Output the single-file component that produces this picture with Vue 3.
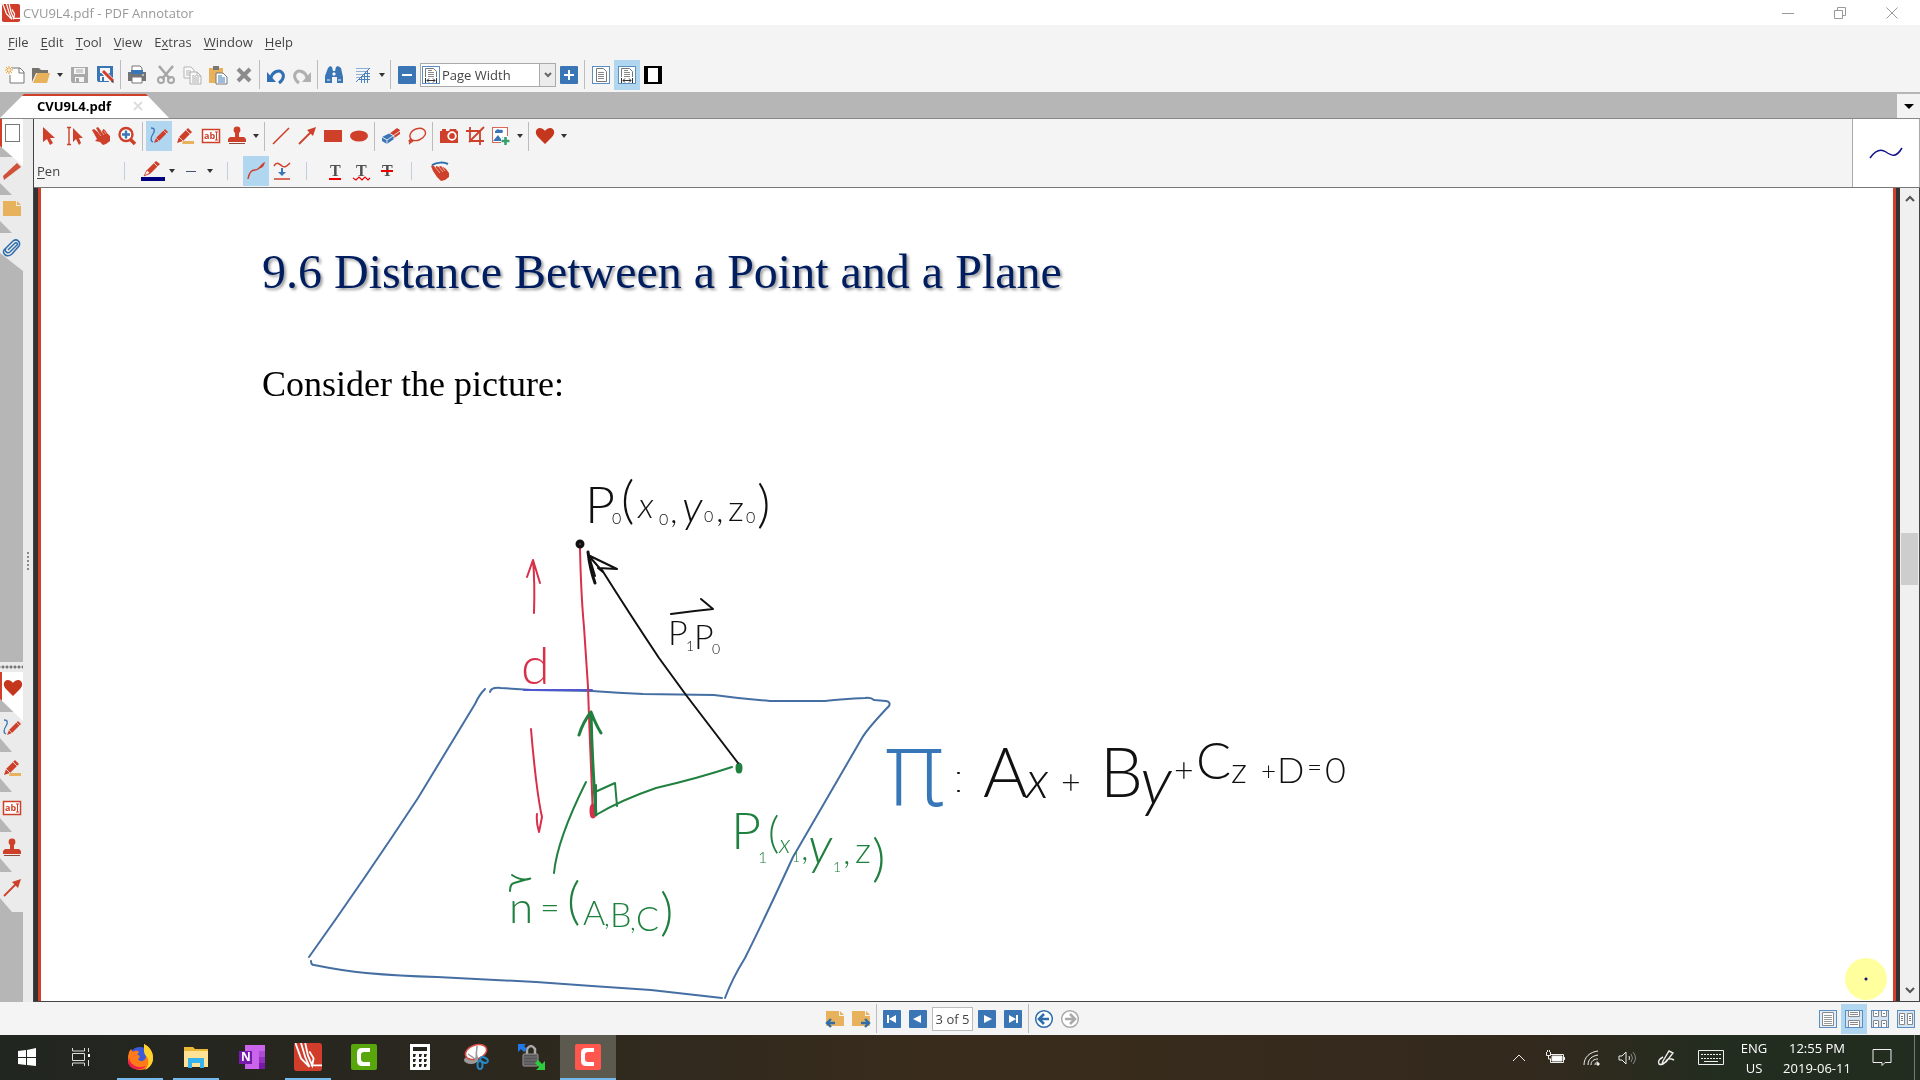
<script setup>
import { ref, h } from 'vue'

const menus = [
  ['', 'F', 'ile'], ['', 'E', 'dit'], ['', 'T', 'ool'], ['', 'V', 'iew'],
  ['E', 'x', 'tras'], ['', 'W', 'indow'], ['', 'H', 'elp']
]

// Letters that belong to an icon: characters, position, size, family
const glyphs = {
  text: { t: 'ab', x: 3, y: 13, size: 9, family: 'Open Sans, sans-serif', fill: '#cf402b' },
  tunder: { t: 'T', x: 5, y: 15, size: 16, family: 'Liberation Serif, serif', fill: '#505050' },
  twave: { t: 'T', x: 5, y: 15, size: 16, family: 'Liberation Serif, serif', fill: '#505050' },
  tstrike: { t: 'T', x: 5, y: 15, size: 16, family: 'Liberation Serif, serif', fill: '#505050', under: true },
  onenote: { t: 'N', x: 3, y: 18, size: 12, family: 'Open Sans, sans-serif', fill: '#fff' }
}
const Icon = ({ name }) => {
  const g = glyphs[name]
  const use = h('use', { href: '#i-' + name })
  if (!g) return h('svg', null, [use])
  const text = h('text', { x: g.x, y: g.y, 'font-size': g.size, 'font-family': g.family, 'font-weight': 700, fill: g.fill }, g.t)
  return h('svg', null, g.under ? [text, use] : [use, text])
}
Icon.props = ['name']

const fileTools = [
  { icon: 'new', label: 'New' }, { icon: 'open', label: 'Open' }, { caret: 'Open recent' },
  { icon: 'save', label: 'Save' }, { icon: 'saveas', label: 'Save as' }, { sep: true },
  { icon: 'print', label: 'Print' }, { gap: true }, { icon: 'cut', label: 'Cut' },
  { icon: 'copy', label: 'Copy' }, { icon: 'paste', label: 'Paste' }, { icon: 'delete', label: 'Delete' },
  { sep: true }, { icon: 'undo', label: 'Undo' }, { icon: 'redo', label: 'Redo' }, { sep: true },
  { icon: 'find', label: 'Find' }, { gap: true }, { icon: 'grid', label: 'Grid' }, { caret: 'Grid options' }, { sep: true },
  { icon: 'minus', label: 'Zoom out' }
]
const viewTools = [
  { icon: 'plus', label: 'Zoom in' }, { sep: true },
  { icon: 'fullpage', label: 'Full page' }, { icon: 'pagewidth', label: 'Page width', on: true },
  { icon: 'fullscreen', label: 'Full screen' }
]
const drawTools = [
  { icon: 'select', label: 'Select' }, { icon: 'textselect', label: 'Select text' },
  { icon: 'hand', label: 'Pan' }, { icon: 'zoom', label: 'Zoom' }, { sep: true },
  { icon: 'pen', label: 'Pen', on: true }, { icon: 'marker', label: 'Marker' },
  { icon: 'text', label: 'Text' }, { icon: 'stamp', label: 'Stamp' }, { caret: 'Stamps' }, { sep: true },
  { icon: 'line', label: 'Line' }, { icon: 'arrow', label: 'Arrow' },
  { icon: 'rect', label: 'Rectangle' }, { icon: 'ellipse', label: 'Ellipse' }, { sep: true },
  { icon: 'eraser', label: 'Eraser' }, { icon: 'lasso', label: 'Lasso' }, { sep: true },
  { icon: 'camera', label: 'Snapshot' }, { icon: 'crop', label: 'Crop' },
  { icon: 'image', label: 'Insert image' }, { caret: 'Insert options' }, { sep: true },
  { icon: 'heart', label: 'Favorites' }, { caret: 'Favorites list' }
]
const penTools = [
  { sep: true }, { icon: 'pencolor', label: 'Pen color' }, { caret: 'Colors' },
  { icon: 'dash', label: 'Line style' }, { caret: 'Line styles' }, { sep: true },
  { icon: 'curve', label: 'Freehand', on: true }, { icon: 'smooth', label: 'Smooth' }, { sep: true },
  { icon: 'tunder', label: 'Underline' }, { icon: 'twave', label: 'Squiggly' }, { icon: 'tstrike', label: 'Strike out' },
  { sep: true }, { icon: 'touch', label: 'Touch input' }
]

const sideTop = [
  { icon: 'pagetab', label: 'Pages', on: true }, { icon: 'marktab', label: 'Annotations' },
  { icon: 'note', label: 'Bookmarks' }, { icon: 'clip', label: 'Attachments' }
]
const sideBottom = [
  { icon: 'heart', label: 'Favorites', on: true }, { icon: 'pen', label: 'Pens' },
  { icon: 'marker', label: 'Markers' }, { icon: 'text', label: 'Texts' },
  { icon: 'stamp', label: 'Stamps' }, { icon: 'arrow', label: 'Arrows' }
]

const layouts = [
  { icon: 'lay1', label: 'Single page' }, { icon: 'lay2', label: 'Continuous', on: true },
  { icon: 'lay3', label: 'Facing continuous' }, { icon: 'lay4', label: 'Facing pages' }
]

const apps = [
  { icon: 'firefox', label: 'Firefox', open: true }, { icon: 'explorer', label: 'File Explorer', open: true },
  { icon: 'onenote', label: 'OneNote' }, { icon: 'annot', label: 'PDF Annotator', open: true },
  { icon: 'camgreen', label: 'Camtasia' }, { icon: 'calc', label: 'Calculator' },
  { icon: 'snip', label: 'Snipping Tool' }, { icon: 'lock', label: 'Remote lock' },
  { icon: 'camred', label: 'Camtasia Recorder', active: true }
]

// Handwritten labels: [character, x, baseline y, size]
const labels = [
  { ink: 'black', parts: [['P', 586, 523, 52], ['0', 613, 524, 16], ['(', 622, 518, 52], ['x', 639, 518, 36], ['0', 660, 525, 16], [',', 671, 523, 34], ['y', 683, 522, 44], ['0', 705, 522, 16], [',', 717, 522, 34], ['z', 729, 521, 36], ['0', 747, 523, 16], [')', 758, 522, 52]] },
  { ink: 'black', parts: [['P', 669, 645, 34], ['1', 687, 651, 14], ['P', 695, 649, 34], ['0', 713, 654, 14]] },
  { ink: 'red', parts: [['d', 522, 684, 52]] },
  { ink: 'green', parts: [['P', 732, 849, 52], ['1', 759, 863, 16], ['(', 769, 848, 44], ['x', 780, 853, 26], ['1', 793, 862, 14], [',', 802, 860, 34], ['y', 809, 864, 52], ['1', 834, 872, 14], [',', 844, 864, 34], ['z', 856, 863, 36], [')', 873, 876, 52]] },
  { ink: 'green', parts: [['n', 510, 923, 44], ['=', 541, 919, 34], ['(', 568, 919, 52], ['A', 584, 925, 34], [',', 605, 926, 26], ['B', 611, 927, 34], [',', 631, 930, 26], ['C', 637, 931, 34], [')', 661, 930, 52]] },
  { ink: 'blue', parts: [['π', 884, 806, 104]] },
  { ink: 'black', parts: [['A', 984, 797, 68], ['x', 1027, 798, 52], ['+', 1062, 794, 34], ['B', 1101, 797, 68], ['y', 1141, 804, 68], ['+', 1175, 782, 34], ['C', 1197, 779, 52], ['z', 1232, 783, 36], ['+', 1262, 780, 26], ['D', 1278, 783, 36], ['=', 1308, 776, 26], ['0', 1326, 783, 36]] }
]
const cursive = (c) => c === 'x' || c === 'y'
const colon = [[959, 773], [959, 791]]

const zoomLevel = ref('Page Width')
const pageText = ref('3 of 5')
</script>

<template>
  <div class="app">
    <svg class="sprite" aria-hidden="true">
      <symbol id="i-annot" viewBox="0 0 20 20"><rect width="20" height="20" rx="2" fill="#d13d2b" /><path d="M1 0l4 11 6 6-3-7L5 0M8 0l2 9 3 7 1-5-3-5M12 16h8" fill="none" stroke="#fff" stroke-width="1.3" /></symbol>
      <symbol id="i-new" viewBox="0 0 20 20"><path d="M7 3h8l4 4v11H5v-8" fill="#fff" stroke="#777" /><path d="M14 3v5h5" fill="none" stroke="#777" /><path d="M4 1v8M0 5h8M1 2l6 6M7 2L1 8" stroke="#e8a640" /><circle cx="4" cy="5" r="1" fill="#fff" /></symbol>
      <symbol id="i-open" viewBox="0 0 20 20"><path d="M1 3h7l2 2h7v3H5L1 17z" fill="#77726a" /><path d="M6 8h13l-3 10H2z" fill="#e8b25c" /></symbol>
      <symbol id="i-save" viewBox="0 0 20 20"><path d="M2 2h17v16H3l-1-2z" fill="#a9a9a9" /><path d="M5 3h11v6H5zM6 12h9v5H6z" fill="#f5f5f5" /><path d="M7 5h7M7 7h7" stroke="#a9a9a9" /><path d="M7 13h3v4H7z" fill="#a9a9a9" /></symbol>
      <symbol id="i-saveas" viewBox="0 0 20 20"><path d="M2 1h16v16H3l-1-2z" fill="#3a76b6" /><path d="M5 3h10v5H5zM5 11h9v5H5z" fill="#f5f5f5" /><path d="M7 12h2v4H7z" fill="#3a76b6" /><path d="M8 6l9 10" stroke="#fff" stroke-width="5" /><path d="M8 6l10 10" stroke="#d13f2a" stroke-width="3" /><path d="M18 15l1 3-3-1" fill="#444" /></symbol>
      <symbol id="i-print" viewBox="0 0 20 20"><path d="M5 1h8l2 2v4H5z" fill="#fff" stroke="#777" /><path d="M1 7h18v9H1z" fill="#747474" /><path d="M4 5h12v4H4z" fill="#3a76b6" /><path d="M5 12h10v6H5z" fill="#fff" stroke="#777" /><path d="M15 10h2" stroke="#fff" /></symbol>
      <symbol id="i-cut" viewBox="0 0 20 20"><path d="M3 1l11 13M17 1L6 14" stroke="#a6a6a6" stroke-width="2.6" /><circle cx="5" cy="15" r="3" fill="none" stroke="#a6a6a6" stroke-width="2" /><circle cx="15" cy="15" r="3" fill="none" stroke="#a6a6a6" stroke-width="2" /></symbol>
      <symbol id="i-copy" viewBox="0 0 20 20"><path d="M2 2h7l3 3v8H2z" fill="#fafafa" stroke="#b5b5b5" /><path d="M4 6h5M4 8h5M4 10h5" stroke="#b5b5b5" /><path d="M8 7h7l4 4v8H8z" fill="#fafafa" stroke="#b0b0b0" /><path d="M15 7v4h4M10 11h4M10 13h7M10 15h7M10 17h7" fill="none" stroke="#b0b0b0" /></symbol>
      <symbol id="i-paste" viewBox="0 0 20 20"><path d="M1 3h14v15H1z" fill="#e8b25c" /><path d="M5 1h6v4H5z" fill="#777" /><path d="M8 8h7l4 4v7H8z" fill="#fff" stroke="#777" /><path d="M10 11h4M10 13h7M10 15h7M10 17h7" stroke="#3a76b6" /></symbol>
      <symbol id="i-delete" viewBox="0 0 20 20"><path d="M4 4l12 12M16 4L4 16" stroke="#8c8c8c" stroke-width="4" /></symbol>
      <symbol id="i-undo" viewBox="0 0 20 20"><path d="M5 13c1-6 9-10 12-4 1 3 0 6-4 9" fill="none" stroke="#2f70b5" stroke-width="3" /><path d="M1 7v10h9z" fill="#2f70b5" /></symbol>
      <symbol id="i-redo" viewBox="0 0 20 20"><path d="M15 13C14 7 6 3 3 9c-1 3 0 6 4 9" fill="none" stroke="#b0b0b0" stroke-width="3" /><path d="M19 7v10h-9z" fill="#b0b0b0" /></symbol>
      <symbol id="i-find" viewBox="0 0 20 20"><path d="M4 3l2-2 2 1 1 4h2l1-4 2-1 3 2 2 9v6h-6v-6H8v6H1v-7z" fill="#3a76b6" /><path d="M9 8h2v2H9zM3 15h3M14 15h3" fill="#fff" stroke="#f4f4f4" /></symbol>
      <symbol id="i-grid" viewBox="0 0 20 20"><path d="M3 3.500h13M3 6.500h10M3 9.500h7M3 12.500h4" stroke="#8fb0d6" /><path d="M3 17L17 3M17 8.500h-5M17 11.500H9M17 14.500H6M8.500 12v6M11.500 9v9M14.500 6v12" stroke="#4c80bb" /></symbol>
      <symbol id="i-minus" viewBox="0 0 20 20"><rect x="1" y="1" width="18" height="18" rx="1" fill="#3a76b6" /><path d="M5 10h10" stroke="#fff" stroke-width="2" /></symbol>
      <symbol id="i-plus" viewBox="0 0 20 20"><rect x="1" y="1" width="18" height="18" rx="1" fill="#3a76b6" /><path d="M5 10h10M10 5v10" stroke="#fff" stroke-width="2" /></symbol>
      <symbol id="i-fullpage" viewBox="0 0 20 20"><rect x="1.500" y="1.500" width="17" height="17" fill="#fff" stroke="#5b8fc2" /><path d="M5.500 3.500h7l3 3v10h-10z" fill="#fff" stroke="#777" /><path d="M7 7.500h6M7 9.500h6M7 11.500h6M7 13.500h6" stroke="#888" /></symbol>
      <symbol id="i-pagewidth" viewBox="0 0 20 20"><rect x="1.500" y="1.500" width="17" height="17" fill="#fff" stroke="#5b8fc2" /><path d="M4.500 12V3.500h8l3 3V12" fill="#fff" stroke="#777" /><path d="M7 5.500h4M7 7.500h6M7 9.500h6M7 11.500h6" stroke="#888" /><path d="M4.500 13v5M15.500 13v5M6 15.500h8M8 13.500l-2 2 2 2M12 13.500l2 2-2 2" fill="none" stroke="#333" /></symbol>
      <symbol id="i-fullscreen" viewBox="0 0 20 20"><path d="M1 1h18v18H1z" /><path d="M5 3h10v14H5z" fill="#fff" /></symbol>
      <symbol id="i-select" viewBox="0 0 20 20"><path d="M4 1v15l4-3 3 6 3-2-3-5h5z" fill="#cf402b" /></symbol>
      <symbol id="i-textselect" viewBox="0 0 20 20"><path d="M2 1.500h2M6 1.500H4v17M2 18.500h4" fill="none" stroke="#cf402b" stroke-width="1.4" /><path d="M8 2v14l3-3 3 6 2-2-2-5h4z" fill="#cf402b" /></symbol>
      <symbol id="i-hand" viewBox="0 0 20 20"><path d="M1 4l2-1 5 4-3-5 2-1 4 5 1-3 2 1 2 3 3 3v5l-4 3-3 1-3-3-5-1 2-2z" fill="#cf402b" /><path d="M7 6l3 4M10 5l3 4M13 5l2 3" stroke="#f3c6bd" stroke-width=".7" /></symbol>
      <symbol id="i-zoom" viewBox="0 0 20 20"><circle cx="9" cy="8.500" r="6.500" fill="#fff" stroke="#cf402b" stroke-width="2.400" /><path d="M13 13l5 5" stroke="#cf402b" stroke-width="3.600" /><path d="M5 8.500h8M9 4.500v8" stroke="#3a76b6" stroke-width="2.400" /></symbol>
      <symbol id="i-pen" viewBox="0 0 20 20"><path d="M2 2c4 0 4 3 2 6s-3 7 0 8" fill="none" stroke="#3a76b6" stroke-width="1.300" /><path d="M5 17l2-5 9-9 3 3-9 9z" fill="#cf402b" /><path d="M7 12l3 3M14 4l4 4" stroke="#f0d0c8" stroke-width=".8" /></symbol>
      <symbol id="i-marker" viewBox="0 0 20 20"><path d="M8 15h11v3H7z" fill="#e8b25c" /><path d="M2 17l2-6 9-9 4 4-9 9z" fill="#cf402b" /><path d="M4 11l4 4M11 4l4 4" stroke="#f3d6cf" /></symbol>
      <symbol id="i-text" viewBox="0 0 20 20"><rect x="1.500" y="3.500" width="17" height="13" fill="#fff" stroke="#cf402b" stroke-width="1.500" /><path d="M14 6h3M15.500 6v8M14 14h3" stroke="#cf402b" /></symbol>
      <symbol id="i-stamp" viewBox="0 0 20 20"><circle cx="10" cy="4" r="3.400" fill="#cf402b" /><path d="M8 6h4v5h5l2 2v3H1v-3l2-2h5z" fill="#cf402b" /><path d="M2 17.500h16" stroke="#8f4a3e" /></symbol>
      <symbol id="i-line" viewBox="0 0 20 20"><path d="M2 18L18 2" stroke="#cf402b" stroke-width="1.600" /></symbol>
      <symbol id="i-arrow" viewBox="0 0 20 20"><path d="M2 18L14 6" stroke="#cf402b" stroke-width="1.800" /><path d="M19 1l-3 9-6-6z" fill="#cf402b" /></symbol>
      <symbol id="i-rect" viewBox="0 0 20 20"><path d="M1 4h18v12H1z" fill="#cf402b" /></symbol>
      <symbol id="i-ellipse" viewBox="0 0 20 20"><ellipse cx="10" cy="10" rx="9" ry="5.500" fill="#cf402b" /></symbol>
      <symbol id="i-eraser" viewBox="0 0 20 20"><path d="M8 8l8-6 3 2v4l-7 5z" fill="#cf402b" /><path d="M1 11l8-4 4 3v3l-7 5-5-3z" fill="#3a76b6" /><path d="M1 11l5 3 13-9M6 14v4M8 7l5 3v3" fill="none" stroke="#f4f4f4" stroke-width=".9" /></symbol>
      <symbol id="i-lasso" viewBox="0 0 20 20"><path d="M5 14C1 11 3 5 9 3c6-2 11 1 9 6-2 4-8 7-13 5-2-1-4 1-2 2s4-2 2-2-1 3-3 4" fill="none" stroke="#cf402b" stroke-width="1.400" /></symbol>
      <symbol id="i-camera" viewBox="0 0 20 20"><path d="M1 5h2V3h4v2h3l1-2h6l1 2h1v12H1z" fill="#cf402b" /><circle cx="13" cy="10" r="3.800" fill="#cf402b" stroke="#fff" stroke-width="1.800" /></symbol>
      <symbol id="i-crop" viewBox="0 0 20 20"><path d="M5 1v14h14M1 5h14v14M4 16L19 1" fill="none" stroke="#cf402b" stroke-width="1.800" /></symbol>
      <symbol id="i-image" viewBox="0 0 20 20"><rect x="1.500" y="1.500" width="15" height="15" fill="#fff" stroke="#da6757" /><path d="M4 6c0-2 3-4 5-2 3-1 4 2 2 3H4zM2 15l5-6 3 4 3-3 3 5z" fill="#3a76b6" /><path d="M14.500 10v9M10 14.500h9" stroke="#fff" stroke-width="5" /><path d="M14.500 11v8M10.500 15h8" stroke="#38a06b" stroke-width="2.600" /></symbol>
      <symbol id="i-heart" viewBox="0 0 20 20"><path d="M10 18L3 11C-1 7 1 2 5 2c3 0 5 3 5 3s2-3 5-3c4 0 6 5 2 9z" fill="#c5371d" /></symbol>
      <symbol id="i-pencolor" viewBox="0 0 24 24"><path d="M3 17l3-6 9-9 4 3-10 10z" fill="#cf402b" /><path d="M3 17l3-6 3 3z" fill="#f4f4f4" stroke="#cf402b" stroke-width=".8" /><path d="M13 4l4 4" stroke="#f3d6cf" /><path d="M0 18h24v4H0z" fill="#00007f" /></symbol>
      <symbol id="i-dash" viewBox="0 0 20 20"><path d="M5 10.500h10" stroke="#46517c" /></symbol>
      <symbol id="i-curve" viewBox="0 0 20 20"><path d="M2 18c1-6 3-9 7-9 5 0 5-5 9-6" fill="none" stroke="#cf402b" stroke-width="1.400" /><path d="M11 8c4-1 4-6 8-7-1 5-4 7-8 7z" fill="#cf402b" /></symbol>
      <symbol id="i-smooth" viewBox="0 0 20 20"><path d="M2 5c3-5 5-2 8 0s5 0 8-3M2 18h16" fill="none" stroke="#cf402b" stroke-width="1.500" /><path d="M10 7v5" stroke="#3a76b6" stroke-width="2" /><path d="M6 11h8l-4 4z" fill="#3a76b6" /></symbol>
      <symbol id="i-tunder" viewBox="0 0 20 20"><path d="M4 18h12" stroke="#f00000" stroke-width="2" /></symbol>
      <symbol id="i-twave" viewBox="0 0 20 20"><path d="M2 17l3 2 3-3 3 3 3-3 3 3 2-2" fill="none" stroke="#f00000" stroke-width="1.200" /></symbol>
      <symbol id="i-tstrike" viewBox="0 0 20 20"><path d="M4 10h12" stroke="#f00000" stroke-width="2" /></symbol>
      <symbol id="i-touch" viewBox="0 0 20 20"><path d="M1 5l2-1 3 3 0-2 3 1 1-1 3 1 3 2 3 4v4l-4 3-4 1-4-4-4-6z" fill="#cf402b" /><path d="M5 6l5 6M8 5l5 6M12 6l3 4" stroke="#f3c6bd" stroke-width=".8" /><path d="M2 4c5-3 12-3 16-1" fill="none" stroke="#2d70ad" stroke-width="2" /></symbol>
      <symbol id="i-pagetab" viewBox="0 0 20 20"><rect x="2.500" y="1.500" width="14" height="17" fill="#fff" stroke="#777" /></symbol>
      <symbol id="i-marktab" viewBox="0 0 20 20"><path d="M1 15l1 4 17-13-4-4z" fill="#cf5138" /></symbol>
      <symbol id="i-note" viewBox="0 0 20 20"><path d="M1 2h13v5h5v10H1z" fill="#e8b25c" /><path d="M15 2l4 4h-4z" fill="#e8b25c" /></symbol>
      <symbol id="i-clip" viewBox="0 0 20 20"><path d="M6 13l7-7c2-1 3 1 2 2l-7 7c-3 2-6-1-4-4l7-7c4-3 8 1 6 5l-7 8c-5 4-10 0-8-4l4-4" fill="none" stroke="#2e6dac" stroke-width="1.500" /></symbol>
      <symbol id="i-prevmark" viewBox="0 0 20 20"><path d="M1 2h13v5h5v10H1z" fill="#e8b25c" /><path d="M15 2l4 4h-4z" fill="#e8b25c" /><path d="M10 14H3M6 10l-4 4 4 4" fill="none" stroke="#2e6dac" stroke-width="2.400" /></symbol>
      <symbol id="i-nextmark" viewBox="0 0 20 20"><path d="M1 2h13v5h5v10H1z" fill="#e8b25c" /><path d="M15 2l4 4h-4z" fill="#e8b25c" /><path d="M10 14h8M14 10l4 4-4 4" fill="none" stroke="#2e6dac" stroke-width="2.400" /></symbol>
      <symbol id="i-first" viewBox="0 0 20 20"><rect x="1" y="1" width="18" height="18" rx="1" fill="#3a76b6" /><path d="M5 6h2v8H5zM14 6v8l-7-4z" fill="#fff" /></symbol>
      <symbol id="i-prev" viewBox="0 0 20 20"><rect x="1" y="1" width="18" height="18" rx="1" fill="#3a76b6" /><path d="M13 6v8l-8-4z" fill="#fff" /></symbol>
      <symbol id="i-next" viewBox="0 0 20 20"><rect x="1" y="1" width="18" height="18" rx="1" fill="#3a76b6" /><path d="M7 6v8l8-4z" fill="#fff" /></symbol>
      <symbol id="i-last" viewBox="0 0 20 20"><rect x="1" y="1" width="18" height="18" rx="1" fill="#3a76b6" /><path d="M13 6h2v8h-2zM6 6v8l7-4z" fill="#fff" /></symbol>
      <symbol id="i-back" viewBox="0 0 20 20"><circle cx="10" cy="10" r="8.300" fill="#fff" stroke="#2e6dac" stroke-width="1.500" /><path d="M15 10H6M10 5l-5 5 5 5" fill="none" stroke="#2e6dac" stroke-width="2.600" /></symbol>
      <symbol id="i-forward" viewBox="0 0 20 20"><circle cx="10" cy="10" r="8.300" fill="#fff" stroke="#aaa" stroke-width="1.500" /><path d="M5 10h9M10 5l5 5-5 5" fill="none" stroke="#aaa" stroke-width="2.600" /></symbol>
      <symbol id="i-lay1" viewBox="0 0 20 20"><rect x="1.500" y="1.500" width="17" height="17" fill="#e3eefa" stroke="#5b8fc2" /><path d="M4.500 3.500h11v13h-11z" fill="#fff" stroke="#888" /><path d="M6 6.500h8M6 8.500h8M6 10.500h8M6 12.500h8M6 14.500h8" stroke="#999" /></symbol>
      <symbol id="i-lay2" viewBox="0 0 20 20"><rect x="1.500" y="1.500" width="17" height="17" fill="#d3e4f4" stroke="#5b8fc2" /><path d="M4.500 2v5.500h11V2M4.500 18v-6.500h11V18" fill="#fff" stroke="#888" /><path d="M6 3.500h8M6 5.500h8M6 13.500h8M6 15.500h8" stroke="#888" /></symbol>
      <symbol id="i-lay3" viewBox="0 0 20 20"><rect x="1.500" y="1.500" width="17" height="17" fill="#d3e4f4" stroke="#5b8fc2" /><path d="M3.500 2v5.500h5V2M11.500 2v5.500h5V2M3.500 18v-6.500h5V18M11.500 18v-6.500h5V18" fill="#fff" stroke="#888" /><path d="M5 4.500h2M13 4.500h2M5 14.500h2M13 14.500h2" stroke="#777" /></symbol>
      <symbol id="i-lay4" viewBox="0 0 20 20"><rect x="1.500" y="1.500" width="17" height="17" fill="#d3e4f4" stroke="#5b8fc2" /><path d="M3.500 4.500h5v11h-5zM11.500 4.500h5v11h-5z" fill="#fff" stroke="#888" /><path d="M5 7.500h2M13 7.500h2M5 9.500h2M13 9.500h2M5 11.500h2M13 11.500h2" stroke="#777" /></symbol>
      <symbol id="i-firefox" viewBox="0 0 28 28"><circle cx="14" cy="15" r="11" fill="#3b5bd8" /><path d="M3 9l2-3 2 3c3-2 5-1 6 0l-2 3c3 0 4 2 1 4 2 4 8 2 8-3 0-4-2-7-2-12 6 3 9 8 9 14 0 8-6 12-13 12S1 22 2 14c0-2 1-4 1-5z" fill="#ff7a18" /><path d="M18 1c6 3 9 8 9 14 0 6-4 10-8 12 3-4 4-7 3-11-1-3-4-4-4-8z" fill="#ffd22e" /><path d="M3 14c1 9 10 12 17 9-4 5-15 5-18-3z" fill="#f0204d" /></symbol>
      <symbol id="i-explorer" viewBox="0 0 28 28"><path d="M2 4h9l2 2h13v4H2z" fill="#eab836" /><path d="M2 8h24v16H2z" fill="#ffe296" /><path d="M6 15h16v10h-4v-5h-8v5H6z" fill="#35b3ee" /></symbol>
      <symbol id="i-onenote" viewBox="0 0 28 28"><path d="M7 2h20v24H7z" fill="#ca64ea" /><path d="M21 8h6v6h-6z" fill="#ae4bd5" /><path d="M21 14h6v6h-6z" fill="#9332bf" /><path d="M21 20h6v6h-6z" fill="#7719aa" /><path d="M1 8h13v13H1z" fill="#7719aa" /></symbol>
      <symbol id="i-camgreen" viewBox="0 0 28 28"><rect x="1" y="1" width="26" height="26" rx="2" fill="#58a60b" /><path d="M20 5H12q-5 0-5 5v8q0 5 5 5h8v-4h-6q-3 0-3-3v-4q0-3 3-3h6z" fill="#fff" /></symbol>
      <symbol id="i-camred" viewBox="0 0 28 28"><rect x="1" y="1" width="26" height="26" rx="2" fill="#ff574d" /><path d="M20 5H12q-5 0-5 5v8q0 5 5 5h8v-4h-6q-3 0-3-3v-4q0-3 3-3h6z" fill="#fff" /></symbol>
      <symbol id="i-calc" viewBox="0 0 28 28"><path d="M4 1h20v26H4z" fill="#fff" /><path d="M7 4h14v4H7zM7 11h3l-1 3H7zM13 11h3l-1 3h-2zM18 11h3l-1 3h-2zM7 16h3l-1 3H7zM13 16h3l-1 3h-2zM18 16h3l-1 3h-2zM7 21h3l-1 3H7zM13 21h3l-1 3h-2zM18 21h3l-1 3h-2z" fill="#27231d" /></symbol>
      <symbol id="i-snip" viewBox="0 0 28 28"><ellipse cx="9" cy="17" rx="7" ry="4" fill="#9a9a9a" /><ellipse cx="14" cy="9" rx="11" ry="7" fill="#fff" stroke="#d94a45" stroke-width="1.500" transform="rotate(-20 14 9)" /><path d="M14 9l2 10M6 11l10 7M15 3l-1 13" stroke="#999" stroke-width="1.500" /><ellipse cx="22" cy="17" rx="4" ry="2.500" fill="none" stroke="#2588c5" stroke-width="2" transform="rotate(25 22 17)" /><ellipse cx="18" cy="22" rx="2.500" ry="4" fill="none" stroke="#2588c5" stroke-width="2" /></symbol>
      <symbol id="i-lock" viewBox="0 0 28 28"><path d="M9 13V6q4-6 8 0v7" fill="none" stroke="#aaa" stroke-width="2.500" /><rect x="5" y="11" width="15" height="12" rx="1" fill="#555" stroke="#999" /><path d="M5 14h15M5 17h15M5 20h15" stroke="#777" /><path d="M0 1h8L6 3l3 3-3 3-3-3-3 3z" fill="#2278e8" /><path d="M27 27h-9l3-3-4-4 3-3 4 4 3-3z" fill="#2dcc3a" /></symbol>
    </svg>

    <header class="titlebar">
      <Icon class="logo" name="annot" />
      <span class="title">CVU9L4.pdf - PDF Annotator</span>
      <button class="win" aria-label="Minimize"><svg viewBox="0 0 12 12"><path d="M0 6.500h12" /></svg></button>
      <button class="win" aria-label="Restore"><svg viewBox="0 0 12 12"><path d="M.5 3.500h8v8h-8zM3.500 3V.5h8v8H9" /></svg></button>
      <button class="win" aria-label="Close"><svg viewBox="0 0 12 12"><path d="M.5.5l11 11M11.500.5l-11 11" /></svg></button>
    </header>

    <nav class="menubar" aria-label="Main menu">
      <button v-for="m in menus" :key="m.join('')">{{ m[0] }}<u>{{ m[1] }}</u>{{ m[2] }}</button>
    </nav>

    <div class="toolbar main-tools">
      <template v-for="(t, i) in fileTools" :key="i">
        <span v-if="t.sep" class="sep"></span>
        <span v-else-if="t.gap" class="gap"></span>
        <button v-else-if="t.caret" class="caret" :aria-label="t.caret"></button>
        <button v-else class="tool" :aria-label="t.label"><Icon :name="t.icon" /></button>
      </template>
      <div class="combo">
        <Icon class="combo-icon" name="pagewidth" />
        <select v-model="zoomLevel" aria-label="Zoom">
          <option>Page Width</option>
          <option>Full Page</option>
        </select>
        <span class="combo-arrow"><svg viewBox="0 0 8 8"><path d="M1 2l3 3 3-3" /></svg></span>
      </div>
      <template v-for="(t, i) in viewTools" :key="i">
        <span v-if="t.sep" class="sep"></span>
        <button v-else class="tool" :class="{ on: t.on }" :aria-label="t.label"><Icon :name="t.icon" /></button>
      </template>
    </div>

    <div class="tabbar">
      <div class="tab">
        <span>CVU9L4.pdf</span>
        <button aria-label="Close tab"><svg viewBox="0 0 10 10"><path d="M1 1l8 8M9 1L1 9" /></svg></button>
      </div>
      <button class="tablist" aria-label="Open documents"></button>
    </div>

    <div class="workspace">
      <aside class="side">
        <div class="side-tabs">
          <div class="group top">
            <button v-for="s in sideTop" :key="s.icon" class="stab" :class="{ on: s.on }" :aria-label="s.label"><Icon :name="s.icon" /></button>
          </div>
          <div class="grip"></div>
          <div class="group bottom">
            <button v-for="s in sideBottom" :key="s.icon" class="stab" :class="{ on: s.on }" :aria-label="s.label"><Icon :name="s.icon" /></button>
          </div>
        </div>
        <div class="splitter"><i></i></div>
      </aside>

      <main class="editor">
        <div class="tools">
          <div class="tool-rows">
            <div class="toolbar draw-row">
              <template v-for="(t, i) in drawTools" :key="i">
                <span v-if="t.sep" class="sep"></span>
                <button v-else-if="t.caret" class="caret" :aria-label="t.caret"></button>
                <button v-else class="tool" :class="{ on: t.on }" :aria-label="t.label"><Icon :name="t.icon" /></button>
              </template>
            </div>
            <div class="toolbar pen-row">
              <span class="pen-name"><u>P</u>en</span>
              <template v-for="(t, i) in penTools" :key="i">
                <span v-if="t.sep" class="sep soft"></span>
                <button v-else-if="t.caret" class="caret" :aria-label="t.caret"></button>
                <button v-else class="tool" :class="[{ on: t.on }, t.icon]" :aria-label="t.label"><Icon :name="t.icon" /></button>
              </template>
            </div>
          </div>
          <div class="preview"><svg viewBox="0 0 34 14"><path d="M1 12C6 5 11 2 17 6s10 6 16-4" /></svg></div>
        </div>

        <div class="document">
          <article class="page">
            <h1>9.6 Distance Between a Point and a Plane</h1>
            <p>Consider the picture:</p>
            <svg class="ink" width="1120" height="551" viewBox="263 450 1120 551">
              <g class="stroke blue">
                <path d="M486 689Q480 695 476 704L419 798Q365 880 310 957" />
                <path d="M312 961q0 4 3 4Q345 971 367 973Q400 976 438 977L537 982L593 986L652 990L723 998" />
                <path d="M726 998Q733 979 746 958Q765 920 794 857L863 738Q869 728 890 706Q892 702 887 701L875 700Q872 697 866 698Q844 699 826 701H771Q744 699 715 695L644 694Q620 693 593 691L533 690L502 688Q492 687 491 692" />
                <path class="violet" d="M525 690h68" />
              </g>
              <g class="stroke red">
                <path d="M581 548Q582 595 585 627Q587 655 589 687L590 717L594 817" />
                <path d="M535 613q1-30-1-53M528 577l6-17 7 23" />
                <path d="M532 729q2 25 5 50t6 38l-3 15q-3-10-2-18" />
                <ellipse class="dot" cx="594" cy="811" rx="1" ry="5" />
              </g>
              <g class="stroke green">
                <path class="thick" d="M592 712Q593 760 597 815M580 735q4-13 12-23 5 13 10 21" />
                <path d="M597 815V785M596 792l20-9 2 23M597 815Q622 800 657 788Q700 778 733 767" />
                <path d="M587 782Q558 840 555 873" />
                <path d="M511 891q0-7 4-8l14-4q4-1 1 0-8 2-17-4" />
                <ellipse class="dot" cx="740" cy="768" rx="1" ry="3" />
              </g>
              <g class="stroke black">
                <circle class="dot" cx="581" cy="544" r="2" />
                <path d="M739 763L687 695L660 658Q630 613 603 570" />
                <path class="thick" d="M589 552q2 17 7 31" />
                <path d="M589 555l29 14-19-1 5 4-14-16 6 20" />
                <path d="M672 614q22-3 42-5l-12-10" />
                <path v-for="(d, i) in colon" :key="i" :d="`M${d[0]} ${d[1]}h1`" />
              </g>
              <text v-for="(l, i) in labels" :key="i" class="hand" :class="l.ink"><tspan v-for="(p, j) in l.parts" :key="j" :class="{ cursive: cursive(p[0]) }" :x="p[1]" :y="p[2]" :font-size="p[3]">{{ p[0] }}</tspan></text>
            </svg>
          </article>
          <div class="scroll">
            <svg viewBox="0 0 10 8"><path d="M1 6l4-4 4 4" /></svg>
            <div class="track"><div class="thumb"></div></div>
            <svg viewBox="0 0 10 8"><path d="M1 2l4 4 4-4" /></svg>
          </div>
          <div class="pointer"></div>
        </div>
      </main>
    </div>

    <footer class="status">
      <div class="toolbar pager">
        <button class="tool" aria-label="Previous bookmark"><Icon name="prevmark" /></button>
        <button class="tool" aria-label="Next bookmark"><Icon name="nextmark" /></button>
        <span class="sep"></span>
        <button class="tool" aria-label="First page"><Icon name="first" /></button>
        <button class="tool" aria-label="Previous page"><Icon name="prev" /></button>
        <input v-model="pageText" aria-label="Page number" />
        <button class="tool" aria-label="Next page"><Icon name="next" /></button>
        <button class="tool" aria-label="Last page"><Icon name="last" /></button>
        <span class="sep"></span>
        <button class="tool" aria-label="Back"><Icon name="back" /></button>
        <button class="tool" aria-label="Forward"><Icon name="forward" /></button>
      </div>
      <div class="toolbar layouts">
        <button v-for="t in layouts" :key="t.icon" class="tool" :class="{ on: t.on }" :aria-label="t.label"><Icon :name="t.icon" /></button>
      </div>
    </footer>

    <div class="taskbar">
      <button class="sys" aria-label="Start"><svg viewBox="0 0 18 18"><path d="M0 3l8-1v7H0zM9 2l9-2v9H9zM0 10h8v7l-8-1zM9 10h9v8l-9-1z" fill="#fff" /></svg></button>
      <button class="sys" aria-label="Task view"><svg viewBox="0 0 18 18"><path d="M.5 0v3h12V0M.5 18v-3h12v3M.5 5.500h12v7H.5zM16.500 0v4M16.500 12v6" fill="none" stroke="#ddd" /><path d="M16 6h2v3h-2z" fill="#fff" /></svg></button>
      <button v-for="a in apps" :key="a.icon" class="app-btn" :class="{ open: a.open, active: a.active }" :aria-label="a.label"><Icon :name="a.icon" /></button>
      <div class="tray">
        <button aria-label="Hidden icons" class="t-a"><svg viewBox="0 0 20 20"><path d="M4 13l6-6 6 6" /></svg></button>
        <button aria-label="Battery" class="t-a"><svg viewBox="0 0 20 20"><path d="M6 6.500h12.500v8H5.500v-4" /><path d="M7 8h10v5H7z" fill="#fff" /><path d="M1.500 4v3.500h4V4M3.500 7v4h2M19.500 9v3M2.500 2v2M4.500 2v2" /></svg></button>
        <button aria-label="Network" class="t-a"><svg viewBox="0 0 20 20"><path d="M3 17C3 9 9 4 17 3M7 17c0-6 4-9 10-10M10 17c0-4 3-6 7-6M14 17c0-2 1-3 3-3" /><path d="M16 15h2v2h-2z" fill="#fff" /></svg></button>
        <button aria-label="Volume" class="t-a"><svg viewBox="0 0 20 20"><path d="M2 8h3l4-4v12l-4-4H2zM12 8q1 2 0 4" /><path d="M14 6q3 4 0 8M16 4q5 6 0 12" stroke="#888" /></svg></button>
        <button aria-label="Pen workspace" class="t-b"><svg viewBox="0 0 20 20"><path d="M7 13L13 3l4 2-7 9-4 2zM7 9q-6 3-4 7 4 2 7-3 2-4 8-1" stroke-width="1.400" /></svg></button>
        <button aria-label="Touch keyboard" class="t-c"><svg viewBox="0 0 26 16"><path d="M.5.5h25v14H.5zM6 11.500h14" /><path d="M3 4.500h20M3 8.500h20" stroke-dasharray="2 1" /></svg></button>
        <button class="lang"><span>ENG</span><span>US</span></button>
        <button class="clock"><span>12:55 PM</span><span>2019-06-11</span></button>
        <button aria-label="Notifications" class="t-d"><svg viewBox="0 0 20 20"><path d="M1 1.500h18v13h-6l-3 3v-3H1z" /></svg></button>
      </div>
    </div>
  </div>
</template>

<style>
body { margin: 0; }
</style>

<style scoped>
.app { display: flex; flex-direction: column; height: 100vh; overflow: hidden; background: #f4f4f4; color: #444; font: 13px/20px "Open Sans", "Noto Sans", sans-serif; }
button { display: flex; align-items: center; justify-content: center; padding: 0; border: 0; background: none; color: inherit; font: inherit; }
svg { display: block; }
.sprite { position: absolute; width: 0; height: 0; }
u { text-underline-offset: 2px; }

.titlebar { display: flex; align-items: center; height: 25px; padding: 0 2px; background: #fff; color: #999; }
.logo { width: 18px; height: 18px; }
.title { flex: 1; padding-left: 3px; }
.win { width: 52px; height: 25px; }
.win svg { width: 12px; height: 12px; fill: none; stroke: #999; }

.menubar { display: flex; align-items: center; gap: 12px; height: 34px; padding-left: 8px; }
.menubar button { display: block; white-space: pre; }

.toolbar { display: flex; align-items: center; }
.main-tools { height: 31px; padding: 0 0 2px 2px; }
.tool { flex: none; width: 26px; height: 30px; }
.tool svg { width: 20px; height: 20px; }
.on.tool { background: #b1d6f0; }
.sep { flex: none; width: 1px; height: 29px; margin: 0 3px 0 2px; background: #bcbcbc; }
.gap { width: 3px; }
.caret { flex: none; width: 12px; height: 26px; }
.caret::after { content: ""; border: 3px solid transparent; border-top: 4px solid #333; border-bottom: 0; }
.combo { position: relative; display: flex; align-items: center; width: 136px; height: 24px; }
.combo select { width: 100%; height: 24px; padding: 0 20px 0 21px; border: 1px solid #aaa; border-radius: 0; appearance: none; background: #fff; color: #444; font: inherit; }
.combo-icon { position: absolute; left: 1px; width: 20px; height: 20px; }
.combo-arrow { position: absolute; right: 1px; display: flex; align-items: center; justify-content: center; width: 15px; height: 22px; border-left: 1px solid #aaa; background: #ececec; pointer-events: none; }
.combo-arrow svg { width: 8px; height: 8px; fill: none; stroke: #666; stroke-width: 2; }

.tabbar { display: flex; align-items: flex-end; justify-content: space-between; height: 26px; border-bottom: 1px solid #888; background: #b6b6b6; }
.tab { display: flex; align-items: center; justify-content: space-between; width: 106px; height: 24px; padding: 0 26px 0 37px; background: linear-gradient(#cf3f2a 2px, #fff 2px); clip-path: polygon(24px 0, 146px 0, 169px 100%, 0 100%); color: #000; font-weight: 700; }
.tab svg { width: 10px; height: 10px; stroke: #ddd; stroke-width: 2; }
.tablist { width: 23px; height: 24px; background: #f3f3f3; }
.tablist::after { content: ""; border: 5px solid transparent; border-top-color: #000; border-bottom: 0; }

.workspace { display: flex; flex: 1; min-height: 0; }
.side { display: flex; width: 33px; background: #ebebeb; }
.side-tabs { display: flex; flex-direction: column; width: 23px; }
.group { background: #b6b6b6; }
.top { flex: 1; }
.bottom { height: 330px; }
.stab { position: relative; align-items: flex-start; width: 23px; height: 38px; padding: 4px 0 0 1px; background: #ebebeb; clip-path: polygon(0 0, 100% 0, 100% 100%, 12px 100%, 0 26px); }
.stab svg { position: relative; width: 20px; height: 20px; }
.bottom .stab { height: 40px; padding-top: 6px; }
.stab.on { z-index: 1; height: 47px; margin-bottom: -9px; border-left: 2px solid #cf3f2a; padding-left: 0; background: #fff; clip-path: polygon(0 0, 100% 0, 100% 100%, 0 27px); }
.bottom .stab.on { height: 49px; }
.top .stab:last-child { clip-path: polygon(0 0, 100% 0, 100% 100%, 0 20px); }
.grip { height: 10px; background: radial-gradient(circle, #777 1px, transparent 2px) 1px 3px / 4px 4px repeat-x; }
.splitter { display: flex; align-items: center; justify-content: center; flex: 1; }
.splitter i { width: 2px; height: 18px; background: repeating-linear-gradient(#888 0 2px, transparent 2px 4px); }

.editor { display: flex; flex-direction: column; flex: 1; min-width: 0; border-left: 1px solid #444; }
.tools { display: flex; height: 68px; border-bottom: 1px solid #777; background: #f4f4f4; }
.tool-rows { flex: 1; }
.draw-row { height: 34px; padding-left: 2px; }
.pen-row { height: 36px; }
.pen-name { width: 87px; padding-left: 3px; }
.sep.soft { height: 18px; margin: 0 15px 0 0; background: #c3cddb; }
.tool + .soft, .caret + .soft { margin-left: 11px; }
.pencolor svg { width: 24px; height: 24px; }
.preview { display: flex; align-items: center; justify-content: center; width: 66px; border: solid #aaa; border-width: 0 1px; background: #fff; }
.preview svg { width: 34px; height: 14px; fill: none; stroke: #10108a; stroke-width: 1.500; }

.document { position: relative; display: flex; flex: 1; min-height: 0; overflow: hidden; background: #333; border-bottom: 1px solid #444; }
.page { flex: 1; margin: 0 4px; min-width: 0; overflow: hidden; border: solid #cf3f2a; border-width: 0 3px; padding: 56px 0 0 221px; background: #fff; font-family: "Liberation Serif", serif; color: #000; }
h1 { margin: 0 0 64px; color: #001d60; font-size: 48px; font-weight: 400; line-height: 56px; text-shadow: 2px 2px 3px rgba(0, 0, 0, .4); }
p { margin: 0 0 46px; font-size: 36px; line-height: 40px; }
.stroke { fill: none; stroke-width: 2; stroke-linecap: round; stroke-linejoin: round; }
.stroke.blue { stroke: #456fa3; }
.stroke .violet { stroke: #5056cf; }
.stroke.red { stroke: #d8304a; }
.stroke.green { stroke: #20803f; }
.stroke.black { stroke: #111; }
.thick { stroke-width: 3; }
.dot { stroke-width: 5; }
.hand { font-family: Lato, "Open Sans", sans-serif; font-weight: 300; }
.cursive { font-style: italic; }
.hand.black { fill: #111; }
.hand.red { fill: #d8304a; }
.hand.green { fill: #20803f; }
.hand.blue { font-family: "DejaVu Sans", sans-serif; font-weight: 200; fill: #3777b7; }

.scroll { display: flex; flex-direction: column; align-items: center; width: 19px; background: #f0f0f0; border-right: 1px solid #444; }
.scroll svg { flex: none; width: 10px; height: 8px; padding: 7px 0; fill: none; stroke: #555; stroke-width: 2; }
.track { position: relative; flex: 1; width: 17px; }
.thumb { position: absolute; top: 42%; width: 17px; height: 52px; background: #cdcdcd; }
.pointer { position: absolute; right: 33px; bottom: 1px; width: 42px; height: 42px; border-radius: 50%; background: radial-gradient(circle, #1a1a70 1px, #ffff9e 2px); mix-blend-mode: multiply; }

.status { display: flex; align-items: center; justify-content: space-between; height: 33px; }
.pager { padding-left: 822px; }
.pager .sep { margin: 0 2px; }
.pager input { box-sizing: border-box; width: 41px; height: 24px; margin: 0 1px; padding: 0; border: 1px solid #bbb; background: #fff; color: #444; font: inherit; text-align: center; }
.layouts { padding-right: 1px; }

.taskbar { display: flex; height: 45px; background: linear-gradient(90deg, #212620, #29271f 20%, #392c1c 50%, #33291d 80%, #222d20 90%); color: #fff; }
.sys { width: 54px; height: 44px; }
.sys + .sys { margin-right: 4px; }
.sys svg { width: 18px; height: 18px; }
.app-btn { width: 56px; box-sizing: border-box; padding-bottom: 2px; }
.app-btn svg { width: 28px; height: 28px; }
.app-btn.open { background: linear-gradient(#76b9ed, #76b9ed) center bottom / 46px 2px no-repeat; }
.app-btn.active { background: linear-gradient(#76b9ed, #76b9ed) center bottom / 100% 2px no-repeat #5c594f; }
.tray { display: flex; align-items: center; margin-left: auto; margin-right: 5px; border-right: 1px solid #777; padding-right: 11px; }
.tray svg { width: 20px; height: 20px; fill: none; stroke: #eee; }
.t-a { width: 36px; }
.t-b { width: 42px; }
.tray .t-c { width: 48px; }
.tray .t-c svg { width: 26px; height: 16px; }
.lang, .clock { flex-direction: column; width: 38px; }
.clock { width: 88px; }
.t-d { width: 42px; }
</style>
